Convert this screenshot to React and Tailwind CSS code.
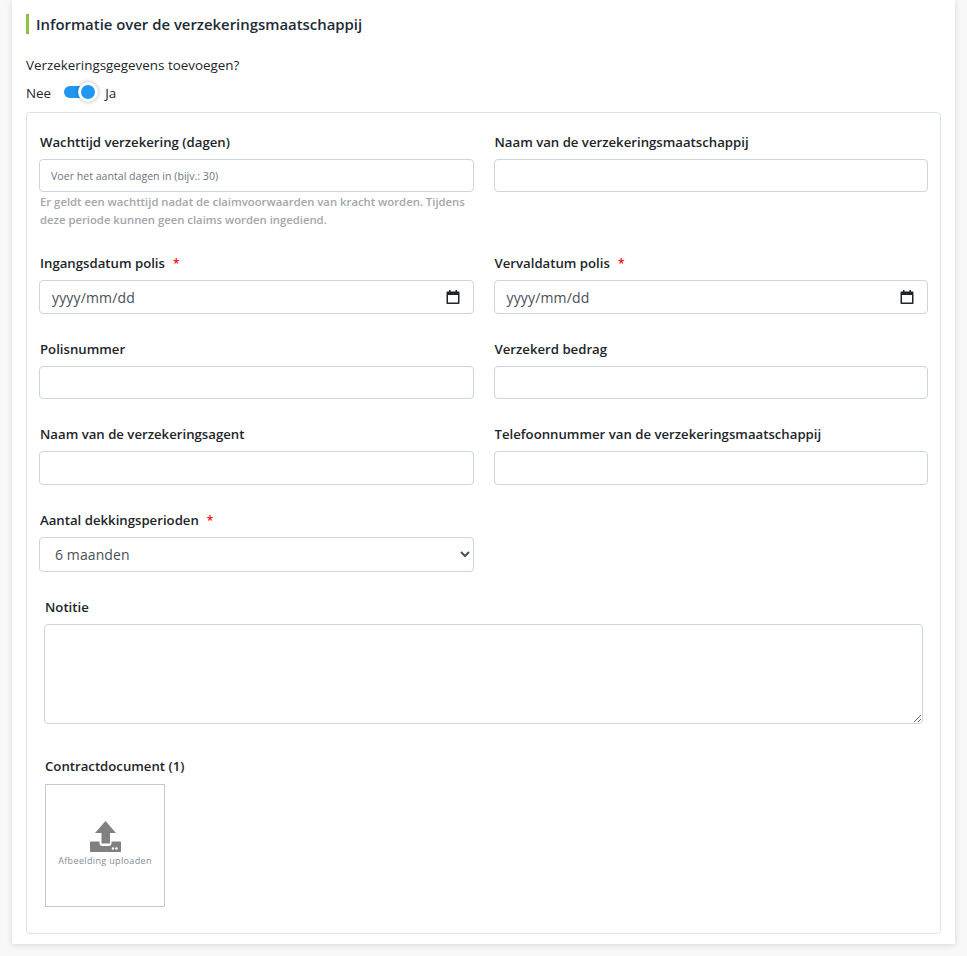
import React, { useState } from "react";

const inputCls = "block w-full border border-[#ced4da] rounded-[4px] bg-white px-3 text-[#495057] outline-none";

function Label({ children, required }) {
    return (
        <label className="block pl-px text-[13.200px] leading-[20px] font-semibold text-[#212529] mb-[7px]">
            {children}
            {required && <span className="text-[#f00] ml-[8px] text-[12px] leading-none">*</span>}
        </label>
    )
}

function DateField() {
    return (
        <div className={`${inputCls} h-[34px] flex items-center justify-between text-[14px] tracking-[0.15px] text-[#6c757d]`}>
            <span>yyyy/mm/dd</span>
            <svg width="14" height="14" viewBox="0 0 14 14" className="mr-[1px]">
                <path fill="#212529" d="M3 0h1.500v1.500h5V0H11v1.500h1.500c.6 0 1 .4 1 1V13c0 .6-.4 1-1 1h-11c-.6 0-1-.4-1-1V2.500c0-.6.4-1 1-1H3V0zM2 5v7.500h10V5H2z" />
            </svg>
        </div>
    )
}

export default function App() {
    const [enabled, setEnabled] = useState(true)

    return (
        <div className="min-h-[956px] bg-[#f8f8f8] px-3 pb-3 font-['Open_Sans',sans-serif]">
            <div className="bg-white shadow-[0_1px_6px_rgba(0,0,0,0.14)] px-[14px] pt-[14px] pb-[10px]">
                <h2 className="border-l-[3px] border-[#8cc63f] pl-[7px] text-[14.900px] leading-[20px] font-semibold text-[#212b36]">
                    Informatie over de verzekeringsmaatschappij
                </h2>
                <p className="mt-[21px] text-[13.400px] leading-[20px] text-[#212529]">Verzekeringsgegevens toevoegen?</p>
                <div className="mt-[8px] flex items-center text-[13.400px] leading-[20px] text-[#212529]">
                    <span>Nee</span>
                    <button
                        type="button"
                        onClick={() => setEnabled(!enabled)}
                        className={`relative ml-[13px] mr-[9px] w-[32px] h-[12px] rounded-full -mt-[3px] ${enabled ? 'bg-[#2196f3]' : 'bg-gray-300'}`}
                    >
                        <span className={`absolute top-[-4px] w-[20px] h-[20px] rounded-full bg-[#2196f3] border-[3px] border-white shadow-[0_0_4px_rgba(0,0,0,0.3)] ${enabled ? 'right-[-2px]' : 'left-[-2px]'}`} />
                    </button>
                    <span>Ja</span>
                </div>

                <div className="mt-[9px] border border-[#dee2e6] rounded-[4px] px-[12px] pt-[19px] pb-[26px]">
                    <div className="grid grid-cols-2 gap-x-[20px]">
                        <div className="h-[121px]">
                            <Label>Wachttijd verzekering (dagen)</Label>
                            <input className={`${inputCls} h-[33px] pl-[11px] text-[10.600px] placeholder:text-[#6c757d]`} placeholder="Voer het aantal dagen in (bijv.: 30)" />
                            <p className="mt-[1px] pl-px text-[11.300px] leading-[18px] font-semibold text-[#a3a6ab]">
                                Er geldt een wachttijd nadat de claimvoorwaarden van kracht worden. Tijdens deze periode kunnen geen claims worden ingediend.
                            </p>
                        </div>
                        <div>
                            <Label>Naam van de verzekeringsmaatschappij</Label>
                            <input className={`${inputCls} h-[33px]`} />
                        </div>

                        <div className="h-[86px]">
                            <Label required>Ingangsdatum polis</Label>
                            <DateField />
                        </div>
                        <div>
                            <Label required>Vervaldatum polis</Label>
                            <DateField />
                        </div>

                        <div className="h-[85px]">
                            <Label>Polisnummer</Label>
                            <input className={`${inputCls} h-[33px]`} />
                        </div>
                        <div>
                            <Label>Verzekerd bedrag</Label>
                            <input className={`${inputCls} h-[33px]`} />
                        </div>

                        <div className="h-[86px]">
                            <Label>Naam van de verzekeringsagent</Label>
                            <input className={`${inputCls} h-[34px]`} />
                        </div>
                        <div>
                            <Label>Telefoonnummer van de verzekeringsmaatschappij</Label>
                            <input className={`${inputCls} h-[34px]`} />
                        </div>

                        <div>
                            <Label required>Aantal dekkingsperioden</Label>
                            <select className="block w-full h-[35px] border border-[#ced4da] rounded-[4px] bg-white pl-[11px] text-[14px] tracking-[0.1px] text-[#495057] outline-none">
                                <option>6 maanden</option>
                                <option>12 maanden</option>
                            </select>
                        </div>
                    </div>

                    <div className="mx-[5px] mt-[25px]">
                        <Label>Notitie</Label>
                        <textarea className="block w-full h-[100px] border border-[#ced4da] rounded-[4px] bg-white px-3 py-2 outline-none" />

                        <div className="mt-[32px]">
                            <Label>Contractdocument (1)</Label>
                            <div className="ml-[1px] mt-[8px] w-[120px] h-[123px] border border-[#c8c8c8] flex flex-col items-center pt-[36px]">
                                <svg width="31" height="31" viewBox="0 0 31 31">
                                    <path fill="#808080" d="M15.500 0L26 12h-6v10.500h-8.500V12H5L15.500 0z" />
                                    <path fill="#808080" d="M0 21.500c0-.6.4-1 1-1h8.500V22c0 2 1 3 3 3h6c2 0 3-1 3-3v-1.500H30c.6 0 1 .4 1 1V30c0 .6-.4 1-1 1H1c-.6 0-1-.4-1-1V21.500z" />
                                    <circle cx="23" cy="27.500" r="1.200" fill="#fff" />
                                    <circle cx="26.500" cy="27.500" r="1.200" fill="#fff" />
                                </svg>
                                <span className="mt-[2px] text-[9px] leading-[14px] tracking-[0.35px] text-[#7f8a96]">Afbeelding uploaden</span>
                            </div>
                        </div>
                    </div>
                </div>
            </div>
        </div>
    )
}
